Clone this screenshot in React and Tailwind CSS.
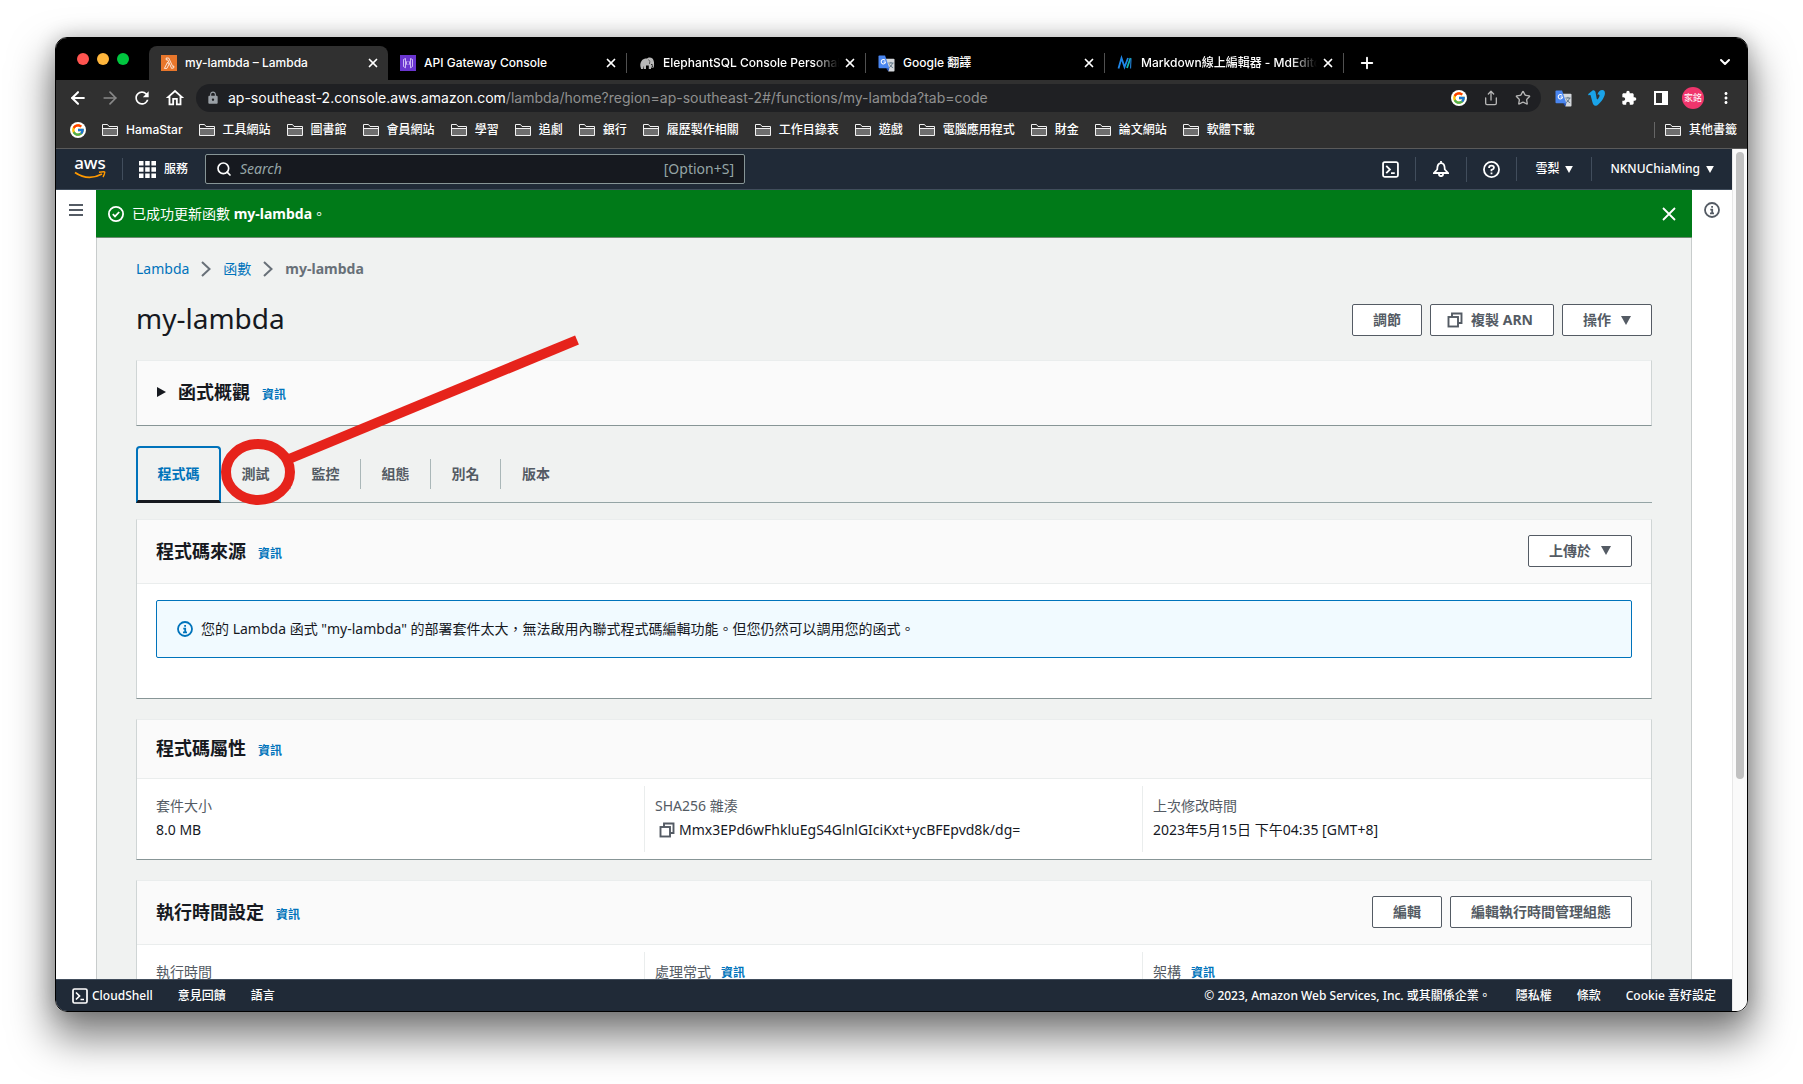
import React from "react";
import {
  ArrowLeft, ArrowRight, Share, Star, ChevronDown, Plus, X, Search,
} from "lucide-react";
import { FcGoogle } from "react-icons/fc";
import { MdRefresh, MdOutlineHome, MdExtension, MdMoreVert, MdLock } from "react-icons/md";

const CHROME = "font-['Inter','Noto_Sans_CJK_TC',sans-serif]";

function Folder() {
  return (
    <svg viewBox="0 0 16 14" className="h-3.5 w-4 shrink-0" fill="none" stroke="#f1f1f1">
      <path d="M1 5.5H15V12.5H1Z" fill="#6e6e6e" stroke="none" />
      <path d="M.5 12.5V1.5H5.500L7 3.500H15.500V12.500H.5M.5 5.500H15.500" />
    </svg>
  );
}

function GoogleBadge() {
  return (
    <span className="flex size-4 shrink-0 items-center justify-center rounded-full bg-white">
      <FcGoogle className="size-3.5" />
    </span>
  );
}

function LambdaIcon() {
  return (
    <svg viewBox="0 0 16 16" className="size-4 shrink-0">
      <rect width="16" height="16" fill="#e8762b" />
      <path d="M5.200 3H7.700L11.600 11.300 12.800 11V12.800L10.600 13.400 6.800 4.900H5.200ZM6.600 7.200 3.400 13.400H5.900L7.800 9.700Z" fill="none" stroke="#fff" strokeWidth=".8" />
    </svg>
  );
}

function GatewayIcon() {
  return (
    <svg viewBox="0 0 16 16" className="size-4 shrink-0">
      <rect width="16" height="16" fill="#6a35d0" />
      <path d="M5.500 3.500 3.500 4.500V11.500L5.500 12.800ZM10.500 3.500 12.500 4.500V11.500L10.500 12.800ZM7 6 6.400 8 7 10M9 6 9.600 8 9 10" fill="none" stroke="#e6d9ff" strokeWidth=".8" />
    </svg>
  );
}

function ElephantIcon() {
  return (
    <svg viewBox="0 0 16 16" className="size-4 shrink-0" fill="#b9b9b9">
      <path d="M2 13.500C1 11 1 8 2.500 6 3.500 4 6 3.500 8 3.500 9 2 12 2 13.500 3.500 15 5 15.500 8 14.800 12.500L13.800 12.500C13.800 11 13.800 9.500 13 9L12 9.500V14H9.800V10.500H7V14H4.800V10.500L4 14H2Z" />
      <path d="M9.500 4.500Q11.500 6 10.500 9" fill="none" stroke="#444" strokeWidth=".8" />
      <path d="M12.800 10Q12 12 13.300 13" fill="none" stroke="#fff" strokeWidth=".8" />
    </svg>
  );
}

function TranslateIcon() {
  return (
    <svg viewBox="0 0 18 18" className="size-[17px] shrink-0">
      <path d="M7 4H16.500Q17.500 4 17.500 5V16.500Q17.500 17.500 16.500 17.500H11Z" fill="#d5d8dc" />
      <path d="M11 8.500H16.500M13.700 7.300V8.500M15.500 8.500Q14.500 12 11.500 13.500M12.200 10Q13.500 12.500 16 13.500" stroke="#5f7485" fill="none" />
      <path d="M1.500 .5H7.500L12 14H1.500Q.5 14 .5 13V1.500Q.5 .5 1.500 .5Z" fill="#4a86f0" />
      <path d="M11 17.500 8.500 14H12Z" fill="#2450b8" />
      <path d="M7.600 5.800A2.300 2.300 0 1 0 8 7.400H5.800" fill="none" stroke="#fff" strokeWidth="1.100" />
    </svg>
  );
}

function MdIcon() {
  return (
    <svg viewBox="0 0 16 16" className="size-4 shrink-0" fill="none" strokeWidth="1.800">
      <path d="M1.500 13.500 4.500 3 7.500 12 11 3" stroke="#1f86e8" />
      <path d="M10 13 13.500 3" stroke="#16b8b0" />
      <path d="M14 3.500 13.500 13.500" stroke="#1e78c8" strokeWidth="1.200" />
    </svg>
  );
}

function VideoIcon() {
  return (
    <svg viewBox="0 0 17 16" className="h-4 w-[17px]" fill="#1aa3e8">
      <path d="M0 4.200 4.200 .8C5.900-.4 7.200 .6 7.600 2.600L8.600 8C9 9.800 9.500 9.800 10.300 8.600 11.600 6.600 11.800 5.400 11.300 4.900 10.800 4.400 10 4.600 9.300 4.900 10.200 1.800 12.200 0 14.400 .1 16.300 .2 17.100 1.600 16.900 3.900 16.500 7.800 11.300 14.600 8.200 15.700 6.200 16.300 5.100 14.700 4.500 12.500L2.900 6.400C2.600 5.100 2.200 4.700 .9 5.500Z" />
    </svg>
  );
}

function InfoIcon({ className }) {
  return (
    <svg viewBox="0 0 16 16" className={className} fill="none" stroke="currentColor" strokeWidth="1.800">
      <circle cx="8" cy="8" r="7" />
      <path d="M6 11.300H10M6.300 7.600H8.200V11.300M7.200 4.800H9" />
    </svg>
  );
}

function ShellIcon({ className }) {
  return (
    <svg viewBox="0 0 16 16" className={className} fill="none" stroke="currentColor" strokeWidth="1.700">
      <rect x="1" y="1" width="14" height="14" rx="1.500" />
      <path d="M4 4.500 7.500 8 4 11.500M8.500 11.500H12" />
    </svg>
  );
}

function CopyIcon() {
  return (
    <svg viewBox="0 0 16 16" className="size-4 shrink-0" fill="none" stroke="currentColor" strokeWidth="1.900">
      <rect x="1.500" y="5" width="9.500" height="9.500" />
      <path d="M5 5V1.500H14.500V11H11" />
    </svg>
  );
}

function Caret({ className }) {
  return (
    <svg viewBox="0 0 10 9" className={className} fill="currentColor">
      <path d="M0 0H10L5 9Z" />
    </svg>
  );
}

function Separator() {
  return (
    <svg viewBox="0 0 10 16" className="h-4 w-2.5 text-[#687078]" fill="none" stroke="currentColor" strokeWidth="2">
      <path d="M1 1 8.500 8 1 15" />
    </svg>
  );
}

const tabs = [
  { title: "my-lambda – Lambda", icon: <LambdaIcon />, active: true },
  { title: "API Gateway Console", icon: <GatewayIcon /> },
  { title: "ElephantSQL Console Personal", icon: <ElephantIcon />, fade: true },
  { title: "Google 翻譯", icon: <TranslateIcon /> },
  { title: "Markdown線上編輯器 - MdEditor", icon: <MdIcon />, fade: true },
];

function TabStrip() {
  return (
    <div className="flex h-[42px] items-end bg-black">
      <div className="flex h-full w-[93px] shrink-0 items-center gap-2 pl-[21px]">
        <span className="size-3 rounded-full bg-[#ff5450]" />
        <span className="size-3 rounded-full bg-[#ffb63c]" />
        <span className="size-3 rounded-full bg-[#00c63f]" />
      </div>
      {tabs.map((t, i) => (
        <div
          key={t.title}
          className={
            "flex h-[34px] w-[239px] min-w-0 items-center rounded-t-lg pr-2 pl-3 " +
            (t.active ? "bg-[#303030]" : "bg-black")
          }
        >
          {t.icon}
          <span
            className={
              "ml-2 min-w-0 flex-1 overflow-hidden text-xs font-medium whitespace-nowrap text-white " +
              (t.fade ? "[mask-image:linear-gradient(to_right,black_85%,transparent)]" : "")
            }
          >
            {t.title}
          </span>
          <button aria-label={"關閉 " + t.title} className="ml-1 text-white">
            <X className="size-3.5" strokeWidth={3} />
          </button>
          {i > 0 && <span className="ml-2 -mr-2 h-5 w-px bg-[#505050]" />}
        </div>
      ))}
      <button aria-label="新分頁" className="mb-2 ml-3.5 text-white">
        <Plus className="size-[18px]" strokeWidth={2.5} />
      </button>
      <button aria-label="搜尋分頁" className="mr-3.5 mb-2.5 ml-auto text-white">
        <ChevronDown className="size-4" strokeWidth={3} />
      </button>
    </div>
  );
}

function Toolbar() {
  return (
    <div className="flex h-9 items-center bg-[#303030] px-3 text-white">
      <div className="flex shrink-0 items-center gap-3">
        <button aria-label="上一頁"><ArrowLeft className="size-5" strokeWidth={2.5} /></button>
        <button aria-label="下一頁" className="text-[#888]"><ArrowRight className="size-5" strokeWidth={2} /></button>
        <button aria-label="重新載入"><MdRefresh className="size-5" /></button>
        <button aria-label="首頁"><MdOutlineHome className="size-[22px]" /></button>
      </div>
      <div className="ml-2.5 flex h-7 min-w-0 flex-1 items-center rounded-full bg-[#1f2023] pr-2.5 pl-2.5">
        <MdLock className="size-3.5 shrink-0 text-[#9aa0a6]" />
        <div className="ml-2 flex-1 truncate text-sm text-[#909090]">
          <span className="text-white">ap-southeast-2.console.aws.amazon.com</span>
          /lambda/home?region=ap-southeast-2#/functions/my-lambda?tab=code
        </div>
        <div className="flex items-center gap-4 text-[#b5b5b5]">
          <GoogleBadge />
          <Share className="size-4" />
          <Star className="size-4" />
        </div>
      </div>
      <div className="ml-3.5 flex shrink-0 items-center gap-4">
        <TranslateIcon />
        <VideoIcon />
        <MdExtension className="size-4" />
        <svg viewBox="0 0 16 16" className="size-4"><path d="M1 1H15V15H1ZM3 3V13H9V3Z" fill="#fff" fillRule="evenodd" /></svg>
        <span className="-mx-[3px] flex size-[22px] items-center justify-center rounded-full bg-[#f0356c] text-[9px]">家銘</span>
        <MdMoreVert className="size-[18px]" />
      </div>
    </div>
  );
}

const bookmarks = ["HamaStar", "工具網站", "圖書館", "會員網站", "學習", "追劇", "銀行", "履歷製作相關", "工作目錄表", "遊戲", "電腦應用程式", "財金", "論文網站", "軟體下載"];

function Bookmarks() {
  return (
    <nav className="flex h-[33px] items-center border-b border-[#5a5a5a] bg-[#303030] pr-2.5 pb-1 pl-3.5 text-xs font-medium text-white">
      <GoogleBadge />
      <div className="ml-4 flex flex-1 items-center gap-4">
        {bookmarks.map((b) => (
          <a key={b} href="#" className="flex items-center gap-2 whitespace-nowrap"><Folder />{b}</a>
        ))}
      </div>
      <a href="#" className="flex items-center gap-2 border-l border-[#666] pl-2.5 whitespace-nowrap"><Folder />其他書籤</a>
    </nav>
  );
}

function AwsHeader() {
  return (
    <header className="flex h-[41px] items-center border-b border-[#414d5c] bg-[#202a37] text-xs font-medium text-white">
      <a href="#" aria-label="AWS" className="ml-[18px] flex h-full w-8 flex-col items-center justify-center pb-0.5">
        <span className="text-[17px] leading-3">aws</span>
        <svg viewBox="0 0 32 8" className="mt-0.5 h-2 w-8" fill="none" stroke="#f90" strokeWidth="1.800">
          <path d="M1 1.500Q14 10.500 28 3" />
          <path d="M25 1.300Q31 .3 30.800 1.300 30.600 3.500 29 6" strokeWidth="1.400" />
        </svg>
      </a>
      <span className="ml-4 h-5.5 w-px bg-[#414d5c]" />
      <button className="ml-4 flex items-center gap-2">
        <svg viewBox="0 0 17 17" className="size-[17px]" fill="#fff">
          <path d="M0 0H4.500V4.500H0ZM6.200 0H10.700V4.500H6.200ZM12.400 0H17V4.500H12.400ZM0 6.200H4.500V10.700H0ZM6.200 6.200H10.700V10.700H6.200ZM12.400 6.200H17V10.700H12.400ZM0 12.400H4.500V17H0ZM6.200 12.400H10.700V17H6.200ZM12.400 12.400H17V17H12.400Z" />
        </svg>
        服務
      </button>
      <label className="ml-[17px] flex h-[30px] w-[540px] items-center rounded-xs border border-[#879596] bg-[#16191f] px-2.5 text-sm font-normal text-[#95a5a6]">
        <Search className="size-4 shrink-0 text-white" strokeWidth={2.5} />
        <input aria-label="Search" placeholder="Search" className="ml-2 min-w-0 flex-1 italic outline-none placeholder:text-[#95a5a6]" />
        <span>[Option+S]</span>
      </label>
      <div className="ml-auto flex items-center">
        <button aria-label="CloudShell" className="px-4"><ShellIcon className="size-[17px]" /></button>
        <button aria-label="通知" className="border-l border-[#414d5c] px-[17px] py-1">
          <svg viewBox="0 0 16 16" className="size-4" fill="none" stroke="currentColor" strokeWidth="1.800">
            <path d="M1 12H15L11.800 8.500C11.800 4.500 10.500 2.200 8 2.200S4.200 4.500 4.200 8.500ZM8 2V0M5.800 12.500Q5.800 15.200 8 15.200T10.200 12.500" />
          </svg>
        </button>
        <button aria-label="支援" className="border-l border-[#414d5c] px-4 py-1">
          <svg viewBox="0 0 16 16" className="size-[17px]" fill="none" stroke="currentColor" strokeWidth="1.700">
            <circle cx="8" cy="8" r="7.100" />
            <path d="M5.700 6.500Q5.700 4.300 8 4.300T10.300 6.300Q10.300 7.600 8 8.300V9.700M8 10.800V12.400" />
          </svg>
        </button>
        <button className="flex items-center gap-1.5 border-l border-[#414d5c] px-[18px] py-1">雪梨<Caret className="h-[7px] w-2" /></button>
        <button className="flex items-center gap-1.5 border-l border-[#414d5c] px-[18px] py-1">NKNUChiaMing<Caret className="h-[7px] w-2" /></button>
      </div>
    </header>
  );
}

function Button({ children }) {
  return (
    <button className="flex h-8 items-center rounded-xs border border-[#545b64] bg-white px-5 text-sm font-bold whitespace-nowrap text-[#545b64]">
      {children}
    </button>
  );
}

function Info() {
  return <a href="#" className="text-xs font-bold text-[#0073bb]">資訊</a>;
}

function Card({ title, actions, tall, children }) {
  return (
    <section className="border border-t-[#eaeded] border-r-[#cfd5d5] border-b-[#879596] border-l-[#cfd5d5] bg-white">
      <div className={"flex items-center border-b border-[#eaeded] bg-[#fafafa] px-[19px] pb-0.5 " + (tall ? "h-16" : "h-[59px]")}>
        <h2 className="flex items-baseline gap-3 text-lg font-bold text-[#16191f]">{title}<Info /></h2>
        <div className="ml-auto flex gap-2">{actions}</div>
      </div>
      {children}
    </section>
  );
}

function Fields({ items }) {
  return (
    <dl className="grid grid-cols-3 py-[7px] pr-[11px] pl-[9px] text-sm leading-6">
      {items.map((f) => (
        <div key={f.label} className="border-l border-[#eaeded] px-2.5 pt-2 pb-2.5 first:border-transparent first:pl-[9px]">
          <dt className="flex items-baseline gap-2.5 text-[#545b64]">{f.label}{f.info && <Info />}</dt>
          <dd className="flex items-center text-[#16191f]">
            {f.copy && <button aria-label="複製" className="mr-1 ml-1 text-[#545b64]"><CopyIcon /></button>}
            {f.value}
          </dd>
        </div>
      ))}
    </dl>
  );
}

function Annotation() {
  return (
    <svg viewBox="0 0 360 176" className="pointer-events-none absolute -top-[114px] left-[84px] h-[176px] w-[360px]" fill="none" stroke="#e6231b" strokeWidth="10">
      <ellipse cx="38" cy="140" rx="32" ry="28" />
      <path d="M69 127 357 8" />
    </svg>
  );
}

function CodeTabs() {
  return (
    <div className="relative mt-5 flex h-[57px] border-b border-[#95a5a6] text-sm font-bold text-[#545b64]">
      <button className="-mb-px w-[85px] rounded-t-sm border-2 border-b-3 border-[#0073bb] border-b-[#16191f] text-[#0073bb]">程式碼</button>
      {["測試", "監控", "組態", "別名", "版本"].map((t, i) => (
        <button key={t} className="flex w-[70px] items-center">
          <span className={"flex h-7.5 w-full items-center justify-center " + (i < 4 ? "border-r border-[#aab7b8]" : "")}>{t}</span>
        </button>
      ))}
      <Annotation />
    </div>
  );
}

function Content() {
  return (
    <main className="flex min-w-0 flex-1 flex-col overflow-hidden bg-[#f0f2f1]">
      <div className="flex h-12 shrink-0 items-center border-b border-[#6c8a70] bg-[#007a18] pr-4 pl-3 text-sm text-white">
        <svg viewBox="0 0 16 16" className="size-4" fill="none" stroke="currentColor" strokeWidth="1.800">
          <circle cx="8" cy="8" r="7.100" />
          <path d="M4.800 8.200 7 10.400 11.200 6" />
        </svg>
        <p className="ml-2">已成功更新函數 <b>my-lambda</b>。</p>
        <button aria-label="關閉" className="ml-auto">
          <svg viewBox="0 0 14 14" className="size-3.5" stroke="currentColor" strokeWidth="1.800"><path d="M1 1 13 13M13 1 1 13" /></svg>
        </button>
      </div>
      <div className="flex-1 border-x border-[#c8cccc] px-[39px]">
        <nav className="mt-5 flex h-[22px] items-center gap-3 text-sm text-[#0073bb]">
          <a href="#">Lambda</a>
          <Separator />
          <a href="#">函數</a>
          <Separator />
          <span className="font-bold text-[#687078]">my-lambda</span>
        </nav>
        <div className="mt-6 flex items-center justify-between">
          <h1 className="pb-1 text-[28px] leading-7 text-[#16191f]">my-lambda</h1>
          <div className="flex gap-2">
            <Button>調節</Button>
            <Button><span className="mr-2 -ml-1"><CopyIcon /></span>複製 ARN</Button>
            <Button>操作<Caret className="ml-2.5 h-[9px] w-2.5" /></Button>
          </div>
        </div>
        <section className="mt-6 flex h-[66px] items-center border border-t-[#eaeded] border-r-[#cfd5d5] border-b-[#879596] border-l-[#cfd5d5] bg-[#fafafa] pb-0.5 pl-5">
          <button aria-label="展開" className="text-[#16191f]">
            <svg viewBox="0 0 9 10" className="h-2.5 w-[9px]" fill="currentColor"><path d="M0 0 9 5 0 10Z" /></svg>
          </button>
          <h2 className="ml-3 flex items-baseline gap-3 text-lg font-bold text-[#16191f]">函式概觀<Info /></h2>
        </section>
        <CodeTabs />
        <div className="mt-4 flex flex-col gap-5">
          <Card title="程式碼來源" tall actions={<Button>上傳於<Caret className="ml-2.5 h-[9px] w-2.5" /></Button>}>
            <div className="mx-[19px] mt-4 mb-10 flex h-[58px] items-center rounded-xs border border-[#0073bb] bg-[#f1faff] px-5 text-sm text-[#16191f]">
              <InfoIcon className="size-4 text-[#0073bb]" />
              <p className="ml-2">您的 Lambda 函式 "my-lambda" 的部署套件太大，無法啟用內聯式程式碼編輯功能。但您仍然可以調用您的函式。</p>
            </div>
          </Card>
          <Card title="程式碼屬性">
            <Fields items={[
              { label: "套件大小", value: "8.0 MB" },
              { label: "SHA256 雜湊", value: "Mmx3EPd6wFhkluEgS4GlnlGIciKxt+ycBFEpvd8k/dg=", copy: true },
              { label: "上次修改時間", value: "2023年5月15日 下午04:35 [GMT+8]" },
            ]} />
          </Card>
          <Card title="執行時間設定" tall actions={<><Button>編輯</Button><Button>編輯執行時間管理組態</Button></>}>
            <Fields items={[
              { label: "執行時間" },
              { label: "處理常式", info: true },
              { label: "架構", info: true },
            ]} />
          </Card>
        </div>
      </div>
    </main>
  );
}

function Footer() {
  return (
    <footer className="flex h-8 shrink-0 items-center border-t border-[#414d5c] bg-[#202a37] px-4 text-xs font-medium whitespace-nowrap text-white">
      <button className="flex items-center gap-1"><ShellIcon className="size-4" />CloudShell</button>
      <a href="#" className="ml-[25px]">意見回饋</a>
      <a href="#" className="ml-[25px]">語言</a>
      <span className="ml-auto">© 2023, Amazon Web Services, Inc. 或其關係企業。</span>
      <a href="#" className="ml-[25px]">隱私權</a>
      <a href="#" className="ml-[25px]">條款</a>
      <a href="#" className="ml-[25px]">Cookie 喜好設定</a>
    </footer>
  );
}

export default function App() {
  return (
    <div className="h-screen overflow-hidden bg-white px-[55px] pt-[37px] pb-[72px]">
      <div className="flex h-full flex-col overflow-hidden rounded-xl border border-black shadow-[0_22px_40px_4px_rgba(0,0,0,0.5),0_0_20px_rgba(0,0,0,0.2)]">
        <div className={CHROME}>
          <TabStrip />
          <Toolbar />
          <Bookmarks />
        </div>
        <div className="flex min-h-0 flex-1 font-['Noto_Sans','Noto_Sans_CJK_TC',sans-serif]">
          <div className="flex min-w-0 flex-1 flex-col">
            <AwsHeader />
            <div className="flex min-h-0 flex-1 bg-white">
              <div className="flex w-10 shrink-0 items-start justify-center pt-3.5">
                <button aria-label="開啟導覽" className="text-[#545b64]">
                  <svg viewBox="0 0 14 12" className="h-3 w-3.5" stroke="currentColor" strokeWidth="2"><path d="M0 1H14M0 6H14M0 11H14" /></svg>
                </button>
              </div>
              <Content />
              <div className="flex w-10 shrink-0 items-start justify-center pt-3">
                <button aria-label="資訊面板" className="text-[#545b64]"><InfoIcon className="size-4" /></button>
              </div>
            </div>
            <Footer />
          </div>
          <div className="w-[15px] shrink-0 border-l border-[#e8e8e8] bg-[#fafafa] pt-[3px] pl-[3px]">
            <div className="h-[73%] w-2 rounded-full bg-[#c1c1c1]" />
          </div>
        </div>
      </div>
    </div>
  );
}
